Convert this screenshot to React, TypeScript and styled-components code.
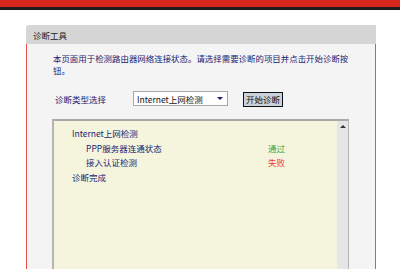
import React from "react";
import styled, { createGlobalStyle } from "styled-components";

const Global = createGlobalStyle`
  html, body { margin: 0; padding: 0; background: #ffffff; }
  body { width: 400px; height: 269px; overflow: hidden; font-family: "Noto Sans CJK SC", "Noto Sans", sans-serif; }
`;

const TopBar = styled.div`
  height: 7px;
  background: #d8281d;
  border-bottom: 3px solid #1c1c1c;
`;

const Panel = styled.div`
  margin: 15px 0 0 26px;
  width: 350px;
`;

const Header = styled.div`
  height: 19px;
  background: #d6d6d6;
  border-top-left-radius: 3px;
  display: flex;
  align-items: center;
  padding-left: 7px;
  font-size: 8.5px;
  color: #222;
`;

const Body = styled.div`
  background: #f4f4f4;
  border-left: 1px solid #e8524a;
  border-right: 1px solid #e8524a;
  padding: 8px 0 0 26px;
  height: 217px;
`;

const Desc = styled.p`
  margin: 0;
  width: 300px;
  font-size: 8.45px;
  line-height: 12px;
  color: #1b1b72;
`;

const Row = styled.div`
  display: flex;
  align-items: center;
  margin-top: 14px;
  margin-left: 2px;
`;

const Label = styled.span`
  width: 78px;
  font-size: 8.5px;
  color: #1b1b72;
`;

const Select = styled.div`
  box-sizing: border-box;
  height: 15px;
  width: 95px;
  background: #fff;
  border: 1px solid #a8a8a8;
  display: flex;
  align-items: center;
  justify-content: space-between;
  padding: 0 4px 0 3px;
  font-size: 8.5px;
  color: #111;
`;

const Arrow = styled.span`
  width: 0;
  height: 0;
  border-left: 3px solid transparent;
  border-right: 3px solid transparent;
  border-top: 3px solid #1b1b72;
`;

const Button = styled.div`
  margin-left: 15px;
  margin-top: 2px;
  height: 13px;
  padding: 0 2px;
  background: #c9d2da;
  border: 1px solid #111;
  font-size: 8.5px;
  line-height: 13px;
  color: #111;
`;

const LogBox = styled.div`
  margin-top: 12px;
  margin-left: -1px;
  width: 297px;
  height: 150px;
  box-sizing: border-box;
  background: #f4f5dc;
  border-top: 2px solid #a9a9a9;
  border-left: 2px solid #b4b4b4;
  border-right: 1px solid #b4b4b4;
  display: flex;
`;

const LogContent = styled.div`
  flex: 1;
  padding: 5px 0 0 18px;
  display: grid;
  grid-template-columns: 196px auto;
  grid-auto-rows: 14.6px;
  align-content: start;
  font-size: 8.5px;
  color: #1b1b72;
`;

const Item = styled.div<{ $indent?: boolean }>`
  padding-left: ${(p) => (p.$indent ? "14px" : "0")};
  line-height: 14.6px;
`;

const Status = styled.div<{ $ok?: boolean }>`
  line-height: 14.6px;
  color: ${(p) => (p.$ok ? "#3ea23e" : "#f03a3a")};
`;

const Scrollbar = styled.div`
  width: 11px;
  background: #e6e6e6;
  display: flex;
  justify-content: center;
  padding-top: 4px;
`;

const UpArrow = styled.span`
  width: 0;
  height: 0;
  border-left: 3px solid transparent;
  border-right: 3px solid transparent;
  border-bottom: 3px solid #333;
`;

const rows: { name: string; indent?: boolean; status?: string; ok?: boolean }[] = [
  { name: "Internet上网检测" },
  { name: "PPP服务器连通状态", indent: true, status: "通过", ok: true },
  { name: "接入认证检测", indent: true, status: "失败", ok: false },
  { name: "诊断完成" },
];

export default function App() {
  return (
    <>
      <Global />
      <TopBar />
      <Panel>
        <Header>诊断工具</Header>
        <Body>
          <Desc>本页面用于检测路由器网络连接状态。请选择需要诊断的项目并点击开始诊断按钮。</Desc>
          <Row>
            <Label>诊断类型选择</Label>
            <Select>
              <span>Internet上网检测</span>
              <Arrow />
            </Select>
            <Button>开始诊断</Button>
          </Row>
          <LogBox>
            <LogContent>
              {rows.map((r) => (
                <React.Fragment key={r.name}>
                  <Item $indent={r.indent}>{r.name}</Item>
                  {r.status ? <Status $ok={r.ok}>{r.status}</Status> : <div />}
                </React.Fragment>
              ))}
            </LogContent>
            <Scrollbar>
              <UpArrow />
            </Scrollbar>
          </LogBox>
        </Body>
      </Panel>
    </>
  );
}
